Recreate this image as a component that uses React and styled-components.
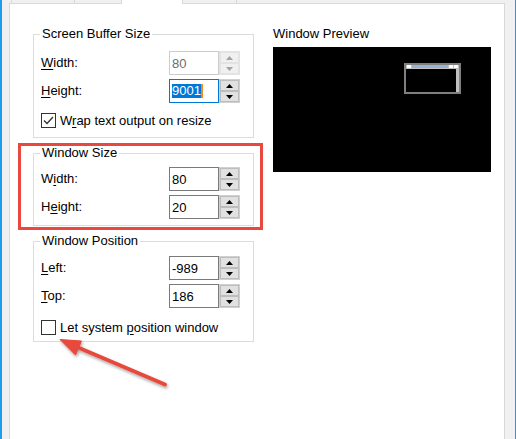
import React from "react"
import styled, { createGlobalStyle } from "styled-components"

const GlobalStyle = createGlobalStyle`
    html, body {
        margin: 0;
        padding: 0;
        background: #f0f0f0;
    }
    body {
        font-family: "Liberation Sans", Arial, sans-serif;
        font-size: 13px;
        color: #000;
    }
`

const Window = styled.div`
    width: 516px;
    height: 439px;
    box-sizing: border-box;
    border-left: 2px solid #1c9cf0;
    border-right: 1px solid #1c9cf0;
    background: #f0f0f0;
    display: flex;
    flex-direction: column;
    overflow: hidden;
`
const TabStrip = styled.div`
    display: flex;
    align-items: flex-start;
    height: 3px;
    padding-left: 9px;
`
const Tab = styled.div`
    box-sizing: border-box;
    width: ${p => p.$w}px;
    height: ${p => (p.$selected ? 4 : 3)}px;
    background: ${p => (p.$selected ? "#fff" : "#f0f0f0")};
    border-right: 1px solid #d9d9d9;
    border-left: ${p => (p.$first ? "1px solid #d9d9d9" : "none")};
    position: relative;
    z-index: 1;
`
const Panel = styled.div`
    flex: 1;
    position: relative;
    margin: 0 10px 0 7px;
    border: 1px solid #d9d9d9;
    border-bottom: none;
    background: #fff;
    display: flex;
    align-items: flex-start;
    gap: 19px;
    padding: 23px 0 0 23px;
`
const LeftColumn = styled.div`
    width: 221px;
    display: flex;
    flex-direction: column;
`
const Group = styled.fieldset`
    margin: ${p => p.$top || 0}px 0 0 0;
    padding: 0;
    min-width: 0;
    border: 1px solid #dcdcdc;
`
const Legend = styled.legend`
    margin-left: 6px;
    padding: 0 2px;
    line-height: 14px;
    font-size: 13px;
`
const GroupBody = styled.div`
    display: flex;
    flex-direction: column;
    gap: 4px;
    padding: ${p => p.$pt}px 13px ${p => p.$pb}px 7px;
`
const Row = styled.div`
    display: flex;
    align-items: center;
    height: 24px;
`
const Label = styled.div`
    flex: 1;
    line-height: 24px;
`
const Key = styled.span`
    text-decoration: underline;
    text-underline-offset: 2px;
`
const Input = styled.div`
    box-sizing: border-box;
    width: 50px;
    height: 24px;
    display: flex;
    align-items: center;
    padding-left: 2px;
    border: 1px solid ${p => (p.$focused ? "#0078d7" : p.$disabled ? "#cccccc" : "#7a7a7a")};
    color: ${p => (p.$disabled ? "#6d6d6d" : "#000")};
    background: #fff;
`
const Selection = styled.span`
    background: #0078d7;
    color: #fff;
    line-height: 14px;
`
const Caret = styled.span`
    width: 2px;
    height: 14px;
    background: #f08a24;
`
const Spinner = styled.div`
    box-sizing: border-box;
    width: 21px;
    height: 24px;
    display: flex;
    flex-direction: column;
    border: 1px solid ${p => (p.$disabled ? "#e3e3e3" : "#d0d0d0")};
    background: #fff;
`
const SpinButton = styled.div`
    flex: 1;
    display: flex;
    align-items: center;
    justify-content: center;
    background: ${p => (p.$disabled ? "#f0f0f0" : "#e1e1e1")};
    border: 1px solid ${p => (p.$disabled ? "#e3e3e3" : "#bdbdbd")};
`
const CheckRow = styled.label`
    display: flex;
    align-items: center;
    gap: 4px;
    height: 15px;
    line-height: 15px;
    margin-top: ${p => p.$mt}px;
`
const Box = styled.span`
    box-sizing: border-box;
    width: 15px;
    height: 15px;
    border: 1px solid #333;
    background: #fff;
    display: flex;
    align-items: center;
    justify-content: center;
`
const PreviewColumn = styled.div`
    display: flex;
    flex-direction: column;
`
const PreviewTitle = styled.div`
    line-height: 14px;
`
const Preview = styled.div`
    position: relative;
    margin-top: 6px;
    width: 218px;
    height: 125px;
    background: #000;
`
const MiniWindow = styled.svg`
    position: absolute;
    left: 131px;
    top: 16px;
`
const Highlight = styled.div`
    position: absolute;
    left: 8px;
    top: 139px;
    width: 245px;
    height: 87px;
    box-sizing: border-box;
    border: 3px solid #e8483d;
    pointer-events: none;
`
const Pointer = styled.svg`
    position: absolute;
    left: 40px;
    top: 325px;
    pointer-events: none;
`

const Arrow = ({up, disabled}) => (
    <svg width="7" height="4" viewBox="0 0 7 4">
        <polygon points={up ? "0,4 3.5,0 7,4" : "0,0 3.5,4 7,0"} fill={disabled ? "#a3a3a3" : "#000"}/>
    </svg>
)

const SpinField = ({label, value, disabled, focused}) => (
    <Row>
        <Label>{label}</Label>
        <Input $disabled={disabled} $focused={focused}>
            {focused ? <><Selection>{value}</Selection><Caret/></> : value}
        </Input>
        <Spinner $disabled={disabled}>
            <SpinButton $disabled={disabled}><Arrow up disabled={disabled}/></SpinButton>
            <SpinButton $disabled={disabled}><Arrow disabled={disabled}/></SpinButton>
        </Spinner>
    </Row>
)

const CheckBox = ({checked, children, mt}) => (
    <CheckRow $mt={mt}>
        <Box>
            {checked && (
                <svg width="11" height="9" viewBox="0 0 11 9">
                    <path d="M1 4.5 L4 7.5 L10 1" stroke="#333" strokeWidth="1.3" fill="none"/>
                </svg>
            )}
        </Box>
        <span>{children}</span>
    </CheckRow>
)

const App = () => {
    return (
        <>
            <GlobalStyle/>
            <Window>
                <TabStrip>
                    <Tab $w={64} $first/>
                    <Tab $w={47}/>
                    <Tab $w={61} $selected/>
                    <Tab $w={54}/>
                </TabStrip>
                <Panel>
                    <LeftColumn>
                        <Group>
                            <Legend>Screen Buffer Size</Legend>
                            <GroupBody $pt={10} $pb={9}>
                                <SpinField label={<><Key>W</Key>idth:</>} value="80" disabled/>
                                <SpinField label={<><Key>H</Key>eight:</>} value="9001" focused/>
                                <CheckBox checked mt={6}>W<Key>r</Key>ap text output on resize</CheckBox>
                            </GroupBody>
                        </Group>

                        <Group $top={8}>
                            <Legend>Window Size</Legend>
                            <GroupBody $pt={7} $pb={6}>
                                <SpinField label={<>W<Key>i</Key>dth:</>} value="80"/>
                                <SpinField label={<>H<Key>e</Key>ight:</>} value="20"/>
                            </GroupBody>
                        </Group>

                        <Group $top={8}>
                            <Legend>Window Position</Legend>
                            <GroupBody $pt={8} $pb={6}>
                                <SpinField label={<><Key>L</Key>eft:</>} value="-989"/>
                                <SpinField label={<><Key>T</Key>op:</>} value="186"/>
                                <CheckBox mt={8}>Let system <Key>p</Key>osition window</CheckBox>
                            </GroupBody>
                        </Group>
                    </LeftColumn>

                    <PreviewColumn>
                        <PreviewTitle>Window Preview</PreviewTitle>
                        <Preview>
                            <MiniWindow width="57" height="31" viewBox="0 0 57 31">
                                <rect x="0" y="0" width="57" height="31" fill="#7f7f7f"/>
                                <rect x="2" y="2" width="53" height="27" fill="#c0c0c0"/>
                                <rect x="3" y="2" width="4" height="3" fill="#fff"/>
                                <rect x="8" y="2" width="36" height="3" fill="#99b4d1"/>
                                <rect x="45" y="2" width="4" height="3" fill="#fff"/>
                                <rect x="50" y="2" width="4" height="3" fill="#fff"/>
                                <rect x="2" y="6" width="50" height="23" fill="#000"/>
                            </MiniWindow>
                        </Preview>
                    </PreviewColumn>

                    <Highlight/>
                    <Pointer width="140" height="70" viewBox="50 329 140 70">
                        <defs>
                            <filter id="shadow" x="-20%" y="-40%" width="140%" height="180%">
                                <feDropShadow dx="1" dy="2" stdDeviation="1.5" floodColor="#000" floodOpacity="0.35"/>
                            </filter>
                        </defs>
                        <g filter="url(#shadow)" fill="#e8483d" stroke="#e8483d">
                            <line x1="77" y1="347" x2="165" y2="384.5" strokeWidth="4" strokeLinecap="round"/>
                            <polygon points="60,339.5 81.5,341 75.5,355" strokeWidth="1" strokeLinejoin="round"/>
                        </g>
                    </Pointer>
                </Panel>
            </Window>
        </>
    )
}

export default App
